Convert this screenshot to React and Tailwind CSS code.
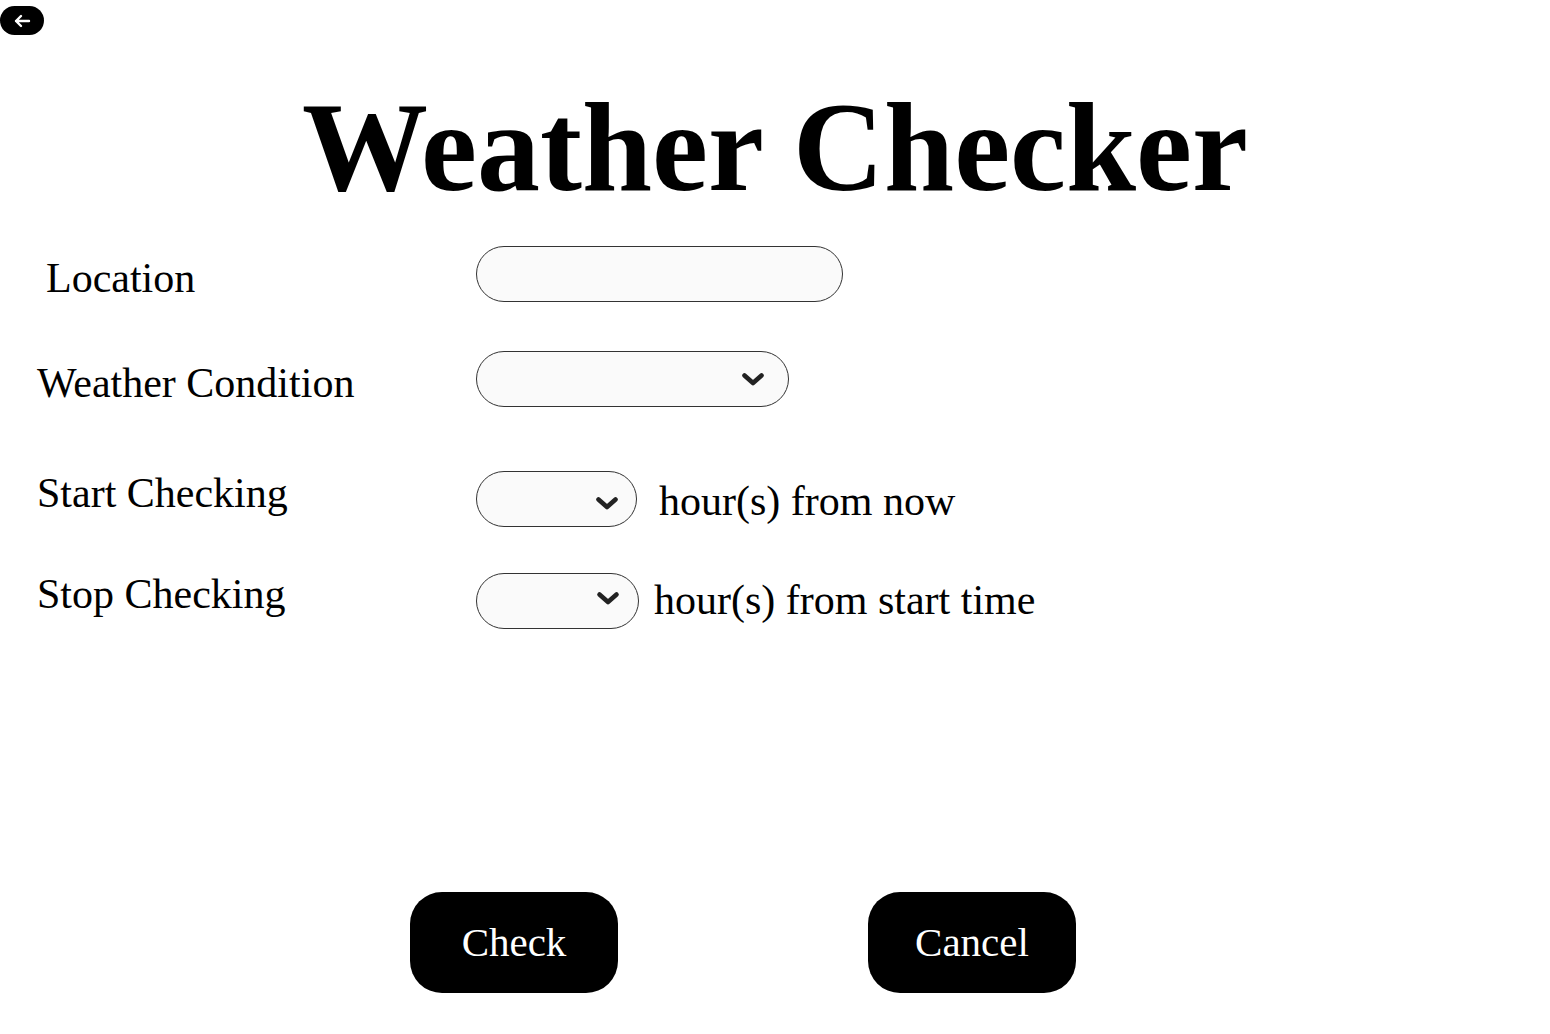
import React from "react";

function Chevron() {
  return (
    <svg width="24" height="15" viewBox="0 0 24 15" fill="none">
      <path d="M3.5 3.5 L12 11 L20.5 3.5" stroke="#222" strokeWidth="4.6" strokeLinecap="round" strokeLinejoin="round" />
    </svg>
  );
}

function FakeSelect({ cls }) {
  return (
    <div className={`flex h-[56px] items-center justify-end rounded-full border border-[#333] bg-[#fafafa] ${cls}`}>
      <Chevron />
    </div>
  );
}

export default function App() {
  return (
    <div className="min-h-[1034px] w-full bg-white text-black" style={{ fontFamily: '"Liberation Serif", "Times New Roman", serif' }}>
      <div className="pt-[6px]">
        <button className="flex h-[29px] w-[44px] items-center justify-center rounded-full bg-black">
          <svg width="18" height="14" viewBox="0 0 18 14" fill="none">
            <path d="M16 7 H3 M8 2 L3 7 L8 12" stroke="white" strokeWidth="2.4" strokeLinecap="round" strokeLinejoin="round" />
          </svg>
        </button>
      </div>

      <h1 className="mt-[50px] text-center text-[126px] font-bold leading-none">Weather Checker</h1>

      <div className="mt-[35px] flex flex-col text-[42px] leading-none">
        <div className="flex h-[56px]">
          <div className="w-[476px] pl-[46px] pt-[11px]">Location</div>
          <div className="h-[56px] w-[367px] rounded-full border border-[#333] bg-[#fafafa]"></div>
        </div>

        <div className="mt-[49px] flex h-[56px]">
          <div className="w-[476px] pl-[37px] pt-[11px]">Weather Condition</div>
          <FakeSelect cls="w-[313px] pr-[23px]" />
        </div>

        <div className="mt-[64px] flex h-[56px]">
          <div className="w-[476px] pl-[37px] pt-[1px]">Start Checking</div>
          <FakeSelect cls="w-[161px] pr-[17px] pt-[8px]" />
          <div className="pl-[22px] pt-[9px]">hour(s) from now</div>
        </div>

        <div className="mt-[46px] flex h-[56px]">
          <div className="w-[476px] pl-[37px] pt-[0px]">Stop Checking</div>
          <FakeSelect cls="w-[163px] pr-[18px] pb-[6px]" />
          <div className="pl-[15px] pt-[6px]">hour(s) from start time</div>
        </div>
      </div>

      <div className="mt-[263px] flex gap-[250px] pl-[410px]">
        <button className="flex h-[101px] w-[208px] items-center justify-center rounded-[32px] bg-black text-[41px] leading-none text-white">
          Check
        </button>
        <button className="flex h-[101px] w-[208px] items-center justify-center rounded-[32px] bg-black text-[41px] leading-none text-white">
          Cancel
        </button>
      </div>
    </div>
  );
}
